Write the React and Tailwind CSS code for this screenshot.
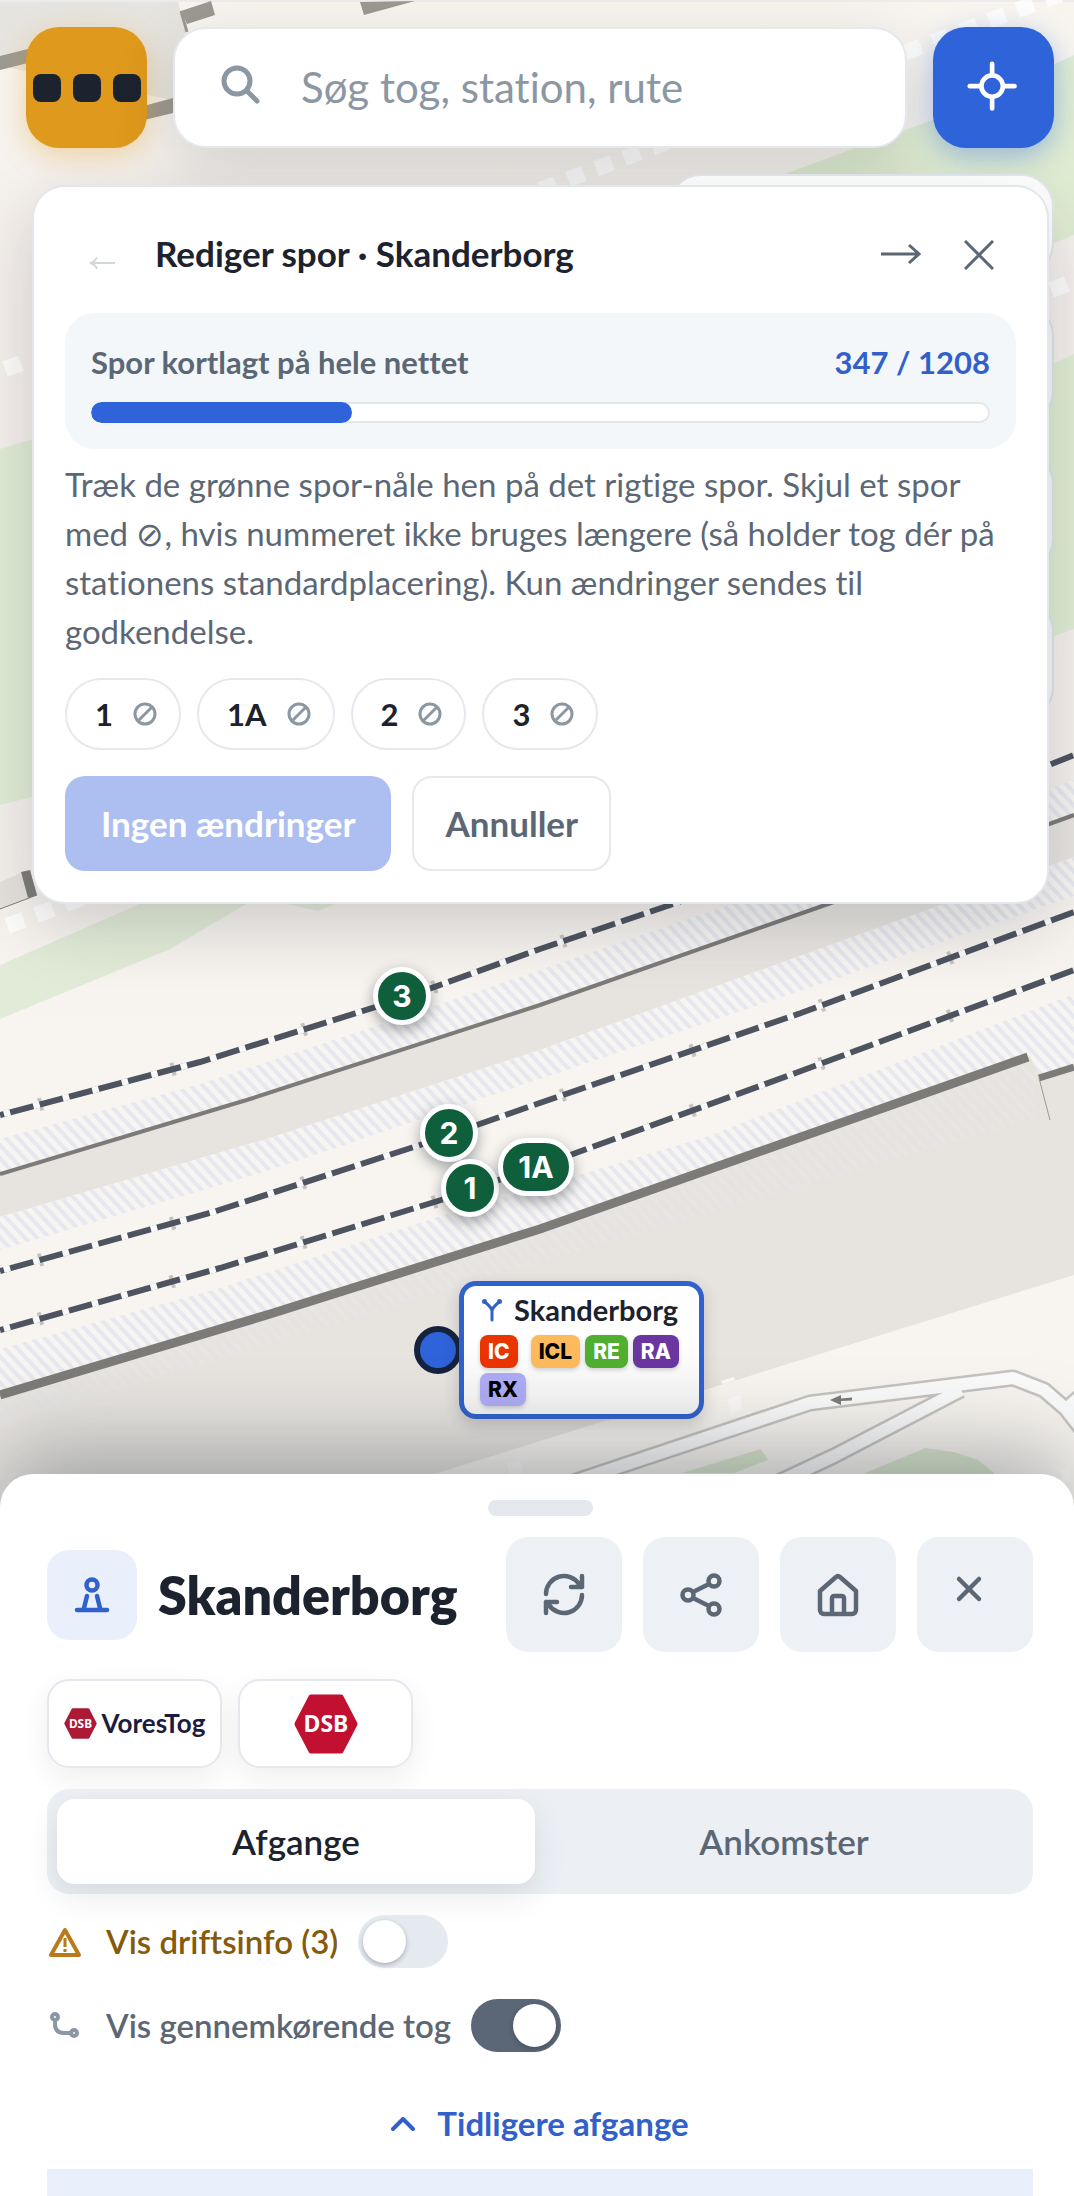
import { useState } from "react";
import clsx from "clsx";

const TRACKS = ["1", "1A", "2", "3"];

const PINS = [
  { label: "3", className: "left-[373px] top-[967px] w-[58px]" },
  { label: "2", className: "left-[420px] top-[1104px] w-[58px]" },
  { label: "1", className: "left-[441px] top-[1159px] w-[58px]" },
  { label: "1A", className: "left-[498px] top-[1138px] w-[76px]" },
];

const LINES = [
  { name: "IC", className: "mr-2 bg-[#ea3500] text-white" },
  { name: "ICL", className: "bg-[#fdba5c] text-black" },
  { name: "RE", className: "bg-[#50ae30] text-white" },
  { name: "RA", className: "bg-[#6a36a0] text-white" },
  { name: "RX", className: "bg-[#aeacf5] text-black" },
];

const RAILS = [
  "M0 1115L200 1062L401 999L540 949L676 903L1049 765L1074 755",
  "M0 1271L210 1213L420 1145L534 1105L801 1013L1074 912",
  "M0 1330L220 1268L441 1200L573 1154L801 1071L1074 970",
];

const PLATFORMS = [
  "M0 1139L200 1084L400 1018L540 970L720 908L1074 780V815L831 903L540 1005L250 1099L0 1174Z",
  "M0 1217L270 1138L540 1050L944 904L1074 857V896L800 991L534 1081L270 1170L0 1250Z",
  "M0 1349L220 1288L441 1216L706 1137L1074 994V1068L1042 1078L1030 1056L540 1229L270 1314L0 1395Z",
];

function MapCanvas() {
  return (
    <svg
      aria-hidden="true"
      className="absolute inset-x-0 top-0 h-[1520px] w-full bg-[#f8f5f0]"
      viewBox="0 0 1074 1520"
      preserveAspectRatio="xMidYMin slice"
      fill="none"
    >
      <defs>
        <pattern id="hatch" width="9" height="20" patternUnits="userSpaceOnUse" patternTransform="rotate(-43)">
          <rect width="4" height="20" fill="#e6e7ef" />
        </pattern>
        <linearGradient id="ground" x1="0" y1="0" x2="0" y2="1">
          <stop offset="0" stopColor="#f8f5ef" />
          <stop offset="0.3" stopColor="#f4efec" />
          <stop offset="0.85" stopColor="#f4f0ec" />
          <stop offset="1" stopColor="#f8f5f0" />
        </linearGradient>
      </defs>

      <path d="M0 0H1074V1020H0Z" fill="url(#ground)" />
      <path d="M0 1V1H1074" stroke="#ececec" strokeWidth="2" />

      {/* Buildings */}
      <path d="M0 2H178L186 30L173 100L0 66Z" fill="#e6e4df" />
      <path d="M0 56L40 46V60L0 70ZM140 107L173 98V113L140 121ZM181 11L211 1L215 15L187 24ZM360 2L415 1L364 15Z" fill="#9b9992" />
      <path d="M181 11L187 32" stroke="#9b9992" strokeWidth="3" />
      <path d="M0 882L21 873L28 898L0 909Z" fill="#e4e1dd" />
      <path d="M21 872L30 870L37 895L28 898Z" fill="#7c7b78" />
      <path d="M0 909L37 895" stroke="#7c7b78" />

      {/* Green areas */}
      <path d="M784 174L933 120L1074 55V235L1040 249L784 249Z" fill="#dfecd2" />
      <path d="M1040 370L1074 354V629L1040 641Z" fill="#dfecd2" />
      <path d="M0 449L40 437V795L0 805Z" fill="#e0ecd5" />
      <path d="M0 965L142 903H248L170 949L0 1019Z" fill="#e2ebd7" />
      <path d="M283 903L318 911L338 903Z" fill="#e2ebd7" />

      {/* Foot paths */}
      <path d="M540 190L1060 -6" stroke="#fff" strokeOpacity="0.8" strokeWidth="16" strokeDasharray="17 13" />
      <path d="M1051 290L1080 279" stroke="#fff" strokeOpacity="0.8" strokeWidth="16" strokeDasharray="17 13" />
      <path d="M5 369L30 360" stroke="#fff" strokeOpacity="0.8" strokeWidth="16" strokeDasharray="17 13" />
      <path d="M7 926L95 893" stroke="#fff" strokeOpacity="0.8" strokeWidth="16" strokeDasharray="18 13" />

      {/* Station surroundings */}
      <path d="M0 1395L270 1314L540 1229L1030 1056L1042 1078L1074 1068V1275L415 1480L300 1520H0Z" fill="#e7e4e0" />
      <path d="M0 1174L250 1099L540 1005L831 903L1074 815V857L944 904L540 1050L270 1138L0 1217Z" fill="#e7e4e0" />

      {PLATFORMS.map((d) => (
        <g key={d}>
          <path d={d} fill="#f7f5f2" />
          <path d={d} fill="url(#hatch)" />
        </g>
      ))}
      <path d="M0 1395L270 1314L540 1229L1030 1056L1037 1118L540 1262L0 1425Z" fill="url(#hatch)" opacity="0.3" />

      <path d="M0 1174L250 1099L540 1005L831 903L1074 815" stroke="#7c7b78" strokeWidth="4" />
      <path d="M0 1395L270 1314L540 1229L1028 1057" stroke="#7c7b78" strokeWidth="9" />
      <path d="M1039 1078L1074 1067" stroke="#7c7b78" strokeWidth="7" />
      <path d="M1039 1078L1050 1120" stroke="#9b9992" />

      {/* Rails */}
      {RAILS.map((d) => (
        <g key={d}>
          <path d={d} stroke="#c4c2bf" strokeWidth="13" strokeDasharray="4 133" strokeDashoffset="-40" />
          <path d={d} stroke="#4d5460" strokeWidth="6" />
          <path d={d} stroke="#f9f9fa" strokeWidth="6.500" strokeDasharray="6.500 24" strokeDashoffset="-4" />
        </g>
      ))}

      {/* Roads */}
      <path d="M682 1473L761 1449L768 1460L734 1473Z" fill="#dae7ce" />
      <path d="M865 1473L899 1459L925 1448L954 1452L978 1460L994 1473V1490H865Z" fill="#dae7ce" />
      <g strokeLinejoin="round">
        <path d="M540 1493L810 1403L1013 1378L1044 1390L1066 1409L1090 1440M1066 1409L1090 1388M961 1390L834 1456L770 1486" stroke="#c6c4c1" strokeWidth="17" />
        <path d="M540 1493L810 1403L1013 1378L1044 1390L1066 1409L1090 1440M1066 1409L1090 1388M961 1390L834 1456L770 1486" stroke="#fbfbfb" strokeWidth="12" />
      </g>
      <path d="M830 1400L841 1395V1398.500L852 1397.500V1400.500L841 1401V1405Z" fill="#7c7c78" />
      <path d="M727 1399L740 1395L743 1410L731 1414ZM721 1381L734 1377L735 1380L723 1384ZM507 1464L520 1460L523 1473L510 1475ZM1060 1470L1068 1468L1072 1482L1064 1484Z" fill="#fbfaf8" />
    </svg>
  );
}

function Prohibit() {
  return (
    <svg className="size-6" viewBox="0 0 24 24" fill="none" stroke="#8b97a3" strokeWidth="3" aria-hidden="true">
      <circle cx="12" cy="12" r="10" />
      <path d="M5 19L19 5" />
    </svg>
  );
}

function MapTools() {
  return (
    <div className="absolute right-5 top-[174px] flex flex-col items-end gap-[27px]">
      <div className="h-[102px] w-[386px] rounded-[33px] border-2 border-[#e5e8ed] bg-white" />
      <div className="size-[121px] rounded-[33px] border-2 border-[#dfe3ea] bg-[#f6f8fa]" />
      <div className="size-[121px] rounded-[33px] border-2 border-[#dfe3ea] bg-[#f6f8fa]" />
      <div className="size-[121px] rounded-[33px] border-2 border-[#dfe3ea] bg-[#f6f8fa]" />
    </div>
  );
}

function TopBar() {
  return (
    <header className="relative flex gap-[26px] pl-[26px] pr-5 pt-[27px]">
      <button
        aria-label="Menu"
        className="flex size-[121px] shrink-0 items-center justify-center gap-3 rounded-[33px] bg-[#df991c] shadow-[0_8px_28px_rgba(223,153,28,0.35)]"
      >
        <span className="size-7 shrink-0 rounded-lg bg-[#1c232e]" />
        <span className="size-7 shrink-0 rounded-lg bg-[#1c232e]" />
        <span className="size-7 shrink-0 rounded-lg bg-[#1c232e]" />
      </button>
      <label className="flex h-[121px] min-w-0 flex-1 items-center gap-10 rounded-[33px] border-2 border-[#e5e8ed] bg-white pl-[46px] pr-8 shadow-[0_22px_66px_rgba(28,35,46,0.16)]">
        <svg className="mb-2 size-10 shrink-0" viewBox="0 0 40 40" fill="none" stroke="#8b97a3" strokeWidth="5" strokeLinecap="round" aria-hidden="true">
          <circle cx="16" cy="17" r="13" />
          <path d="M26 27L36 37" />
        </svg>
        <input
          type="text"
          aria-label="Søg"
          placeholder="Søg tog, station, rute"
          className="min-w-0 flex-1 bg-transparent text-[42px] text-[#1c232e] outline-none placeholder:text-[#8b97a3]"
        />
      </label>
      <button
        aria-label="Find min placering"
        className="flex size-[121px] shrink-0 items-center justify-center rounded-[33px] bg-[#2e63d9] shadow-[0_8px_28px_rgba(46,99,217,0.4)]"
      >
        <svg className="size-14" viewBox="2 0 56 60" fill="none" stroke="#fff" strokeWidth="5" strokeLinecap="round">
          <circle cx="28" cy="28" r="11.500" />
          <path d="M28 4V14M28 42V52M4 28H14M42 28H52" />
        </svg>
      </button>
    </header>
  );
}

function EditPanel() {
  const mapped = 347;
  const total = 1208;

  return (
    <section className="relative ml-8 mr-[25px] mt-[37px] rounded-[33px] border-2 border-[#e3e6eb] bg-white px-[31px] pb-[31px] pt-[31px] shadow-[0_22px_66px_rgba(28,35,46,0.18)]">
      <div className="flex items-center gap-1">
        <button disabled aria-label="Forrige" className="flex size-[74px] items-center justify-center">
          <svg className="h-8 w-[26px]" viewBox="0 0 26 32" fill="none" stroke="#d2d7d8" strokeWidth="2">
            <path d="M26 24H2M8 18Q6 23 1 24Q6 25 8 30" />
          </svg>
        </button>
        <h2 className="mb-1 ml-3 flex-1 text-[35px] font-bold leading-[49px] text-[#1c232e]">
          Rediger spor · Skanderborg
        </h2>
        <button aria-label="Næste" className="flex size-[74px] items-center justify-center">
          <svg className="h-6 w-10" viewBox="0 0 40 24" fill="none" stroke="#5c6775" strokeWidth="3">
            <path d="M0 11H38M28 2L38 11L28 20" />
          </svg>
        </button>
        <button aria-label="Luk" className="flex size-[74px] items-center justify-center">
          <svg className="size-[30px]" viewBox="0 0 30 30" fill="none" stroke="#5c6775" strokeWidth="3">
            <path d="M1 1L29 29M29 1L1 29" />
          </svg>
        </button>
      </div>

      <div className="mt-[21px] rounded-[30px] bg-[#f3f7fa] px-[26px] pb-[26px] pt-[27px]">
        <div className="flex items-center justify-between text-[31px] font-bold leading-[44px]">
          <span className="text-[#5c6775]">Spor kortlagt på hele nettet</span>
          <span className="text-[#3260ca]">
            {mapped} / {total}
          </span>
        </div>
        <div className="mt-[18px] h-[21px] overflow-hidden rounded-full bg-white inset-ring-2 inset-ring-[#e3e7ed]">
          <div
            className="h-full rounded-full bg-[#2e63d9]"
            style={{ width: `${Math.round((mapped / total) * 100)}%` }}
          />
        </div>
      </div>

      <p className="mt-[11px] text-[33px] leading-[49px] text-[#5c6775]">
        Træk de grønne spor-nåle hen på det rigtige spor. Skjul et spor med ⊘, hvis nummeret
        ikke bruges længere (så holder tog dér på stationens standardplacering). Kun ændringer
        sendes til godkendelse.
      </p>

      <div className="mt-[22px] flex flex-wrap gap-4">
        {TRACKS.map((track) => (
          <button
            key={track}
            aria-label={`Skjul spor ${track}`}
            className="flex h-[72px] items-center gap-5 rounded-full border-2 border-[#e5e8ed] pl-7 pr-[22px] text-[31px] font-bold text-[#1c232e]"
          >
            {track}
            <Prohibit />
          </button>
        ))}
      </div>

      <div className="mt-[26px] flex gap-[21px] text-[35px] font-bold">
        <button disabled className="h-[95px] rounded-[20px] bg-[#adbff0] px-9 text-white">
          Ingen ændringer
        </button>
        <button className="h-[95px] rounded-[20px] border-2 border-[#e5e8ed] px-[31px] text-[#5c6775]">
          Annuller
        </button>
      </div>
    </section>
  );
}

function StationMarker() {
  return (
    <>
      {PINS.map((pin) => (
        <button
          key={pin.label}
          className={clsx(
            "absolute flex h-[58px] items-center justify-center rounded-full border-[5px] border-white bg-[#0f5f3c] font-['Inter',sans-serif] text-[30px] font-bold text-white shadow-[0_5px_14px_rgba(28,35,46,0.4)]",
            pin.className
          )}
        >
          {pin.label}
        </button>
      ))}
      <span className="absolute left-[414px] top-[1326px] size-12 rounded-full border-[6px] border-[#17233d] bg-[#2e63d9]" />
      <div className="absolute left-[459px] top-[1281px] w-[245px] rounded-[17px] border-[5px] border-[#3162cb] bg-linear-to-b from-white from-40% to-[#f4f4f4] pb-2 pl-4 pr-2 pt-1 shadow-[0_5px_16px_rgba(28,35,46,0.2)]">
        <div className="mb-[5px] flex items-center gap-3">
          <svg className="ml-0.5 h-6 w-5" viewBox="0 0 20 24" fill="none" stroke="#3162cb" strokeWidth="3" strokeLinecap="round" aria-hidden="true">
            <path d="M10 22V13Q10 10 3 4M10 13Q10 10 17 4" />
            <circle cx="2.500" cy="3.500" r="1" />
            <circle cx="17.500" cy="3.500" r="1" />
          </svg>
          <span className="text-[29px] font-bold leading-10 text-[#1c232e]">Skanderborg</span>
        </div>
        <div className="flex flex-wrap gap-[5px] font-['Inter',sans-serif] text-[21px] font-extrabold">
          {LINES.map((line) => (
            <span
              key={line.name}
              className={clsx("flex h-[33px] items-center rounded-lg px-2 shadow-[0_2px_4px_rgba(28,35,46,0.2)]", line.className)}
            >
              {line.name}
            </span>
          ))}
        </div>
      </div>
    </>
  );
}

function ActionButton({ label, children }) {
  return (
    <button aria-label={label} className="flex h-[115px] w-[116px] shrink-0 items-center justify-center rounded-[22px] bg-[#edf1f6]">
      <svg className="size-11" viewBox="-2 -1 44 44" fill="none" stroke="#5c6775" strokeWidth="4.500" strokeLinecap="round" strokeLinejoin="round">
        {children}
      </svg>
    </button>
  );
}

function Operators() {
  return (
    <div className="mt-[27px] flex gap-4">
      <a href="#vorestog" className="flex h-[89px] w-[175px] items-center justify-center gap-[5px] rounded-[22px] border-2 border-[#e5e8ed] bg-white shadow-[0_10px_28px_rgba(28,35,46,0.07)]">
        <svg className="h-[31px] w-[33px]" viewBox="0 0 64 60" aria-hidden="true">
          <path d="M17 3H47L61 30L47 57H17L3 30Z" fill="#ac1a36" stroke="#ac1a36" strokeWidth="5" strokeLinejoin="round" />
          <text x="32" y="38" textAnchor="middle" className="fill-white font-['Noto_Sans',sans-serif] text-[23px] font-bold">DSB</text>
        </svg>
        <span className="text-[26px] font-bold text-[#1c1c40]">VoresTog</span>
      </a>
      <a href="#dsb" aria-label="DSB" className="flex h-[89px] w-[175px] items-center justify-center rounded-[22px] border-2 border-[#e5e8ed] bg-white shadow-[0_10px_28px_rgba(28,35,46,0.07)]">
        <svg className="h-[60px] w-16" viewBox="0 0 64 60">
          <path d="M17 3H47L61 30L47 57H17L3 30Z" fill="#c21030" stroke="#c21030" strokeWidth="5" strokeLinejoin="round" />
          <text x="32" y="38" textAnchor="middle" className="fill-white font-['Noto_Sans',sans-serif] text-[23px] font-bold">DSB</text>
        </svg>
      </a>
    </div>
  );
}

function Toggle({ id, checked, onChange }) {
  return (
    <input
      id={id}
      type="checkbox"
      role="switch"
      checked={checked}
      onChange={(e) => onChange(e.target.checked)}
      className="h-[53px] w-[90px] appearance-none rounded-full bg-[#e5e9f0] p-[5px] before:block before:size-[43px] before:rounded-full before:bg-white before:shadow-[0_2px_5px_rgba(28,35,46,0.3)] checked:bg-[#5b6676] checked:before:ml-[37px]"
    />
  );
}

function StationSheet() {
  const [tab, setTab] = useState("Afgange");
  const [showAlerts, setShowAlerts] = useState(false);
  const [showPassing, setShowPassing] = useState(true);

  return (
    <section className="relative flex flex-1 flex-col rounded-t-[33px] bg-white pl-[47px] pr-[41px] pt-[26px] shadow-[0_-22px_88px_rgba(28,35,46,0.36)]">
      <div className="h-4 w-[105px] self-center rounded-full bg-[#e4e8ee]" />

      <div className="mt-[21px] flex items-center gap-[21px]">
        <div className="flex size-[90px] shrink-0 items-center justify-center rounded-[22px] bg-[#e9effb]">
          <svg className="size-9" viewBox="0 0 36 36" fill="none" stroke="#3162cb" strokeWidth="4.500" strokeLinecap="round" aria-hidden="true">
            <circle cx="18" cy="8" r="5.500" />
            <path d="M13 19L10 31M23 19L26 31M3 33H33" />
          </svg>
        </div>
        <h1 className="min-w-0 flex-1 text-[52px] font-extrabold leading-[64px] text-[#1c232e]">Skanderborg</h1>
        <ActionButton label="Opdater">
          <path d="M2 20A18 18 0 0 1 35 10L38 13M38 2V13H27M38 21A18 18 0 0 1 5 31L2 28M2 39V28H13" />
        </ActionButton>
        <ActionButton label="Del">
          <circle cx="7" cy="21" r="5.500" />
          <circle cx="33" cy="7" r="5.500" />
          <circle cx="33" cy="35" r="5.500" />
          <path d="M12 18L28 10M12 24L28 32" />
        </ActionButton>
        <ActionButton label="Hjem">
          <path d="M6 40H34A4 4 0 0 0 38 36V17L22 3A3 3 0 0 0 18 3L2 17V36A4 4 0 0 0 6 40ZM14 40V24A2 2 0 0 1 16 22H24A2 2 0 0 1 26 24V40" />
        </ActionButton>
        <ActionButton label="Luk station">
          <path d="M4 5L24 25M24 5L4 25" />
        </ActionButton>
      </div>

      <Operators />

      <div role="tablist" className="mt-[21px] flex gap-2.5 rounded-[22px] bg-[#ecf0f5] p-2.5">
        {["Afgange", "Ankomster"].map((name) => (
          <button
            key={name}
            role="tab"
            aria-selected={tab === name}
            onClick={() => setTab(name)}
            className={clsx(
              "h-[85px] flex-1 rounded-[18px] text-[35px] font-semibold",
              tab === name
                ? "bg-white text-[#1c232e] shadow-[0_12px_32px_rgba(28,35,46,0.1)]"
                : "text-[#5c6775]"
            )}
          >
            {name}
          </button>
        ))}
      </div>

      <div className="mt-[21px] flex h-[53px] items-center">
        <svg className="size-9" viewBox="0 0 36 36" fill="none" stroke="#b97a1c" strokeWidth="4" strokeLinejoin="round" aria-hidden="true">
          <path d="M18 6L32 31H4Z" />
          <path d="M18 14V23M18 25V28" strokeWidth="3" />
        </svg>
        <label htmlFor="alerts" className="ml-[23px] mr-5 text-[33px] font-semibold text-[#855a0c]">
          Vis driftsinfo (3)
        </label>
        <Toggle id="alerts" checked={showAlerts} onChange={setShowAlerts} />
      </div>

      <div className="mt-[31px] flex h-[53px] items-center">
        <svg className="size-9" viewBox="0 0 36 36" fill="none" stroke="#8b97a3" strokeWidth="4" aria-hidden="true">
          <circle cx="8" cy="9" r="3" />
          <circle cx="27" cy="25" r="3" />
          <path d="M8 12V16Q8 25 17 25H24" />
        </svg>
        <label htmlFor="passing" className="ml-[23px] mr-5 text-[33px] font-semibold text-[#5c6775]">
          Vis gennemkørende tog
        </label>
        <Toggle id="passing" checked={showPassing} onChange={setShowPassing} />
      </div>

      <button className="mt-[47px] flex h-[49px] items-center gap-[22px] self-center text-[33px] font-bold text-[#3260ca]">
        <svg className="h-3.5 w-6" viewBox="0 0 24 14" fill="none" stroke="currentColor" strokeWidth="4" strokeLinecap="round" strokeLinejoin="round" aria-hidden="true">
          <path d="M2 12L12 2L22 12" />
        </svg>
        Tidligere afgange
      </button>

      <div className="mt-[21px] min-h-7 flex-1 bg-[#e9effb]" />
    </section>
  );
}

export default function App() {
  return (
    <div className="relative flex min-h-screen flex-col overflow-hidden bg-white font-['Lato','Noto_Sans',sans-serif] [font-variant-ligatures:none]">
      <MapCanvas />
      <TopBar />
      <MapTools />
      <EditPanel />
      <StationMarker />
      <main className="mt-[570px] flex flex-1 flex-col">
        <StationSheet />
      </main>
    </div>
  );
}
